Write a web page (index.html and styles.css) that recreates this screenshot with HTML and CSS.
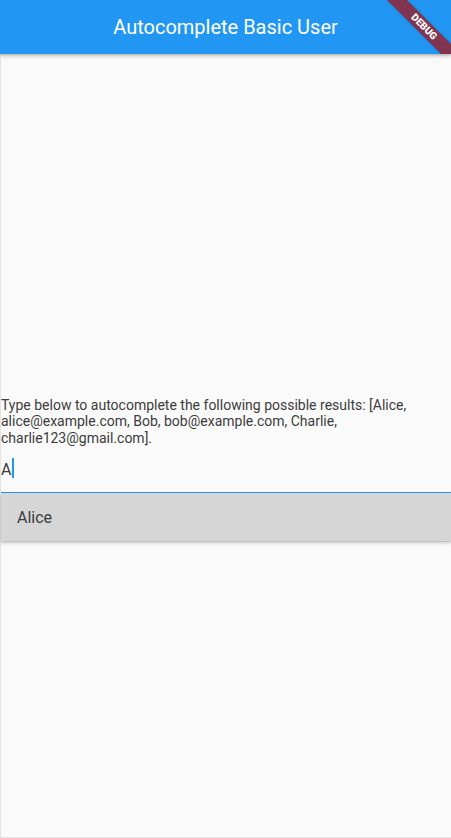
FILE: index.html
```html
<!DOCTYPE html>
<html>
<head>
<meta charset="utf-8">
<link rel="stylesheet" href="styles.css">
</head>
<body>
<div class="screen">
  <header class="appbar">
    <h1 class="title">Autocomplete Basic User</h1>
    <div class="banner"><span>DEBUG</span></div>
  </header>
  <main class="content">
    <p class="hint">Type below to autocomplete the following possible results: [Alice, alice@example.com, Bob, bob@example.com, Charlie, charlie123@gmail.com].</p>
    <div class="field">
      <span class="value">A</span><span class="cursor"></span>
    </div>
    <div class="options">
      <div class="option">Alice</div>
    </div>
  </main>
</div>
</body>
</html>
```

FILE: styles.css
```css
* { box-sizing: border-box; }
html, body {
  margin: 0;
  padding: 0;
  background: #fafafa;
}
body {
  font-family: Roboto, "Noto Sans", sans-serif;
  color: #3c3c3c;
}
.screen {
  width: 451px;
  height: 838px;
  display: flex;
  flex-direction: column;
  overflow: hidden;
  position: relative;
}
.appbar {
  height: 54px;
  flex: none;
  background: #2196f3;
  display: flex;
  align-items: center;
  justify-content: center;
  box-shadow: 0 2px 4px rgba(0, 0, 0, 0.22), 0 1px 2px rgba(0, 0, 0, 0.12);
  position: relative;
  z-index: 2;
  overflow: hidden;
}
.title {
  margin: 0;
  font-size: 20px;
  font-weight: 400;
  color: #fff;
  line-height: 24px;
}
.banner {
  position: absolute;
  left: 379px;
  top: 20px;
  width: 90px;
  height: 14px;
  background: #80344f;
  transform: rotate(45deg);
  display: flex;
  align-items: center;
  justify-content: center;
  box-shadow: 0 0 3px rgba(0, 0, 0, 0.2);
}
.banner span {
  color: #fff;
  font-size: 10px;
  font-weight: 900;
  line-height: 1;
}
.content {
  flex: 1;
  border-left: 1px solid #e4e4e4;
  border-bottom: 1px solid #e4e4e4;
  padding-top: 343px;
}
.hint {
  margin: 0;
  font-size: 14px;
  line-height: 16.4px;
}
.field {
  height: 47px;
  padding-top: 14px;
  border-bottom: 1px solid #2196f3;
  display: flex;
  align-items: flex-start;
  font-size: 16px;
  line-height: 19px;
}
.cursor {
  width: 2px;
  height: 20px;
  margin-top: -2px;
  margin-left: 1px;
  background: #2196f3;
}
.options {
  background: #d6d6d6;
  box-shadow: 0 2px 4px rgba(0, 0, 0, 0.2), 0 1px 2px rgba(0, 0, 0, 0.1);
}
.option {
  height: 48px;
  padding: 0 16px;
  display: flex;
  align-items: center;
  font-size: 16px;
}
```
